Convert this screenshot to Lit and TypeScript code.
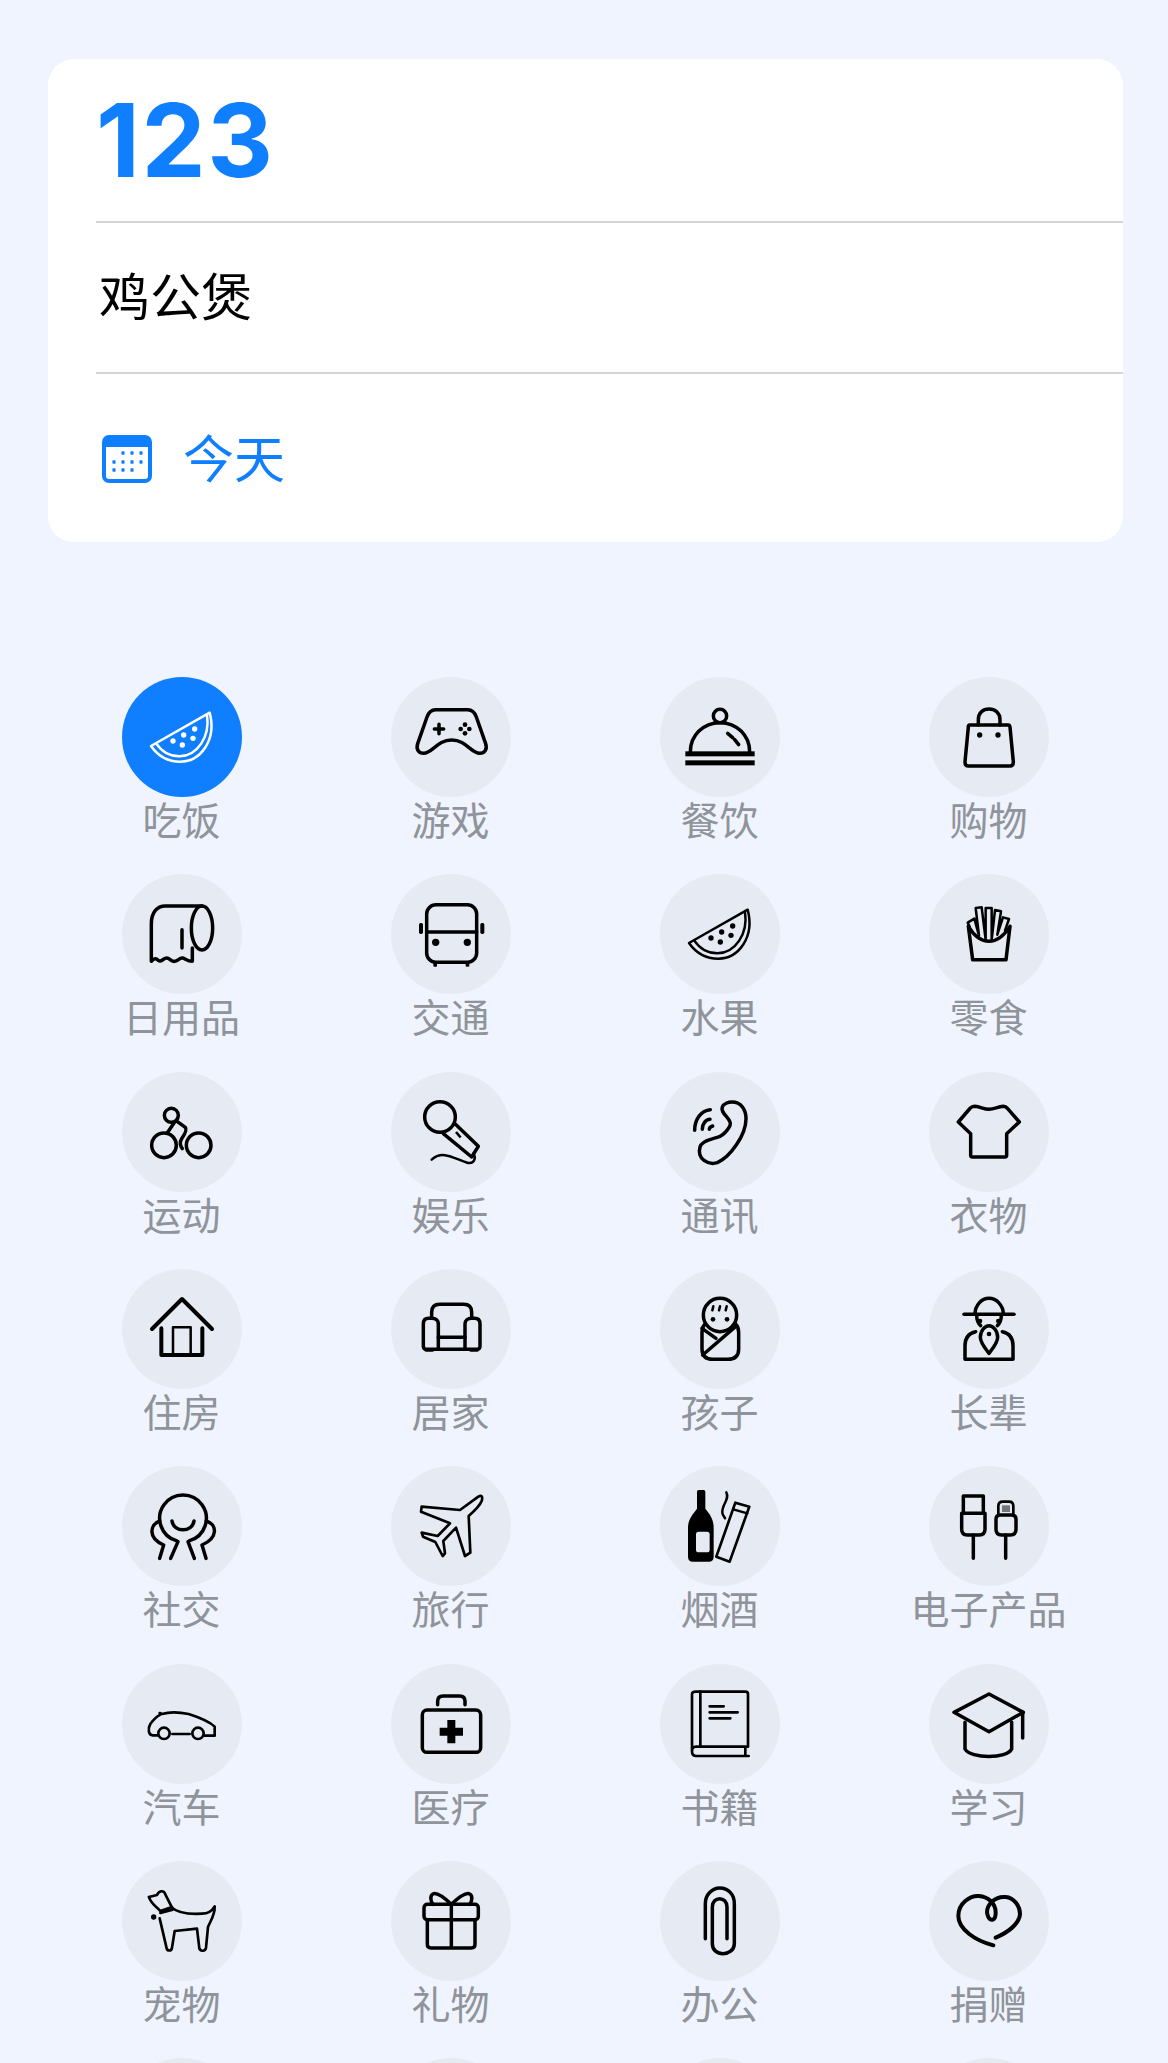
import { LitElement, html, css, svg } from "lit";
import { customElement } from "lit/decorators.js";

const melon = svg`
  <path d="M263 107 L87 207 C110 240 140 254 175 254 C235 254 285 190 263 107Z"/>
  <path d="M103 200 C120 225 145 238 172 238 C225 238 265 180 255 114" />
  <g class="f"><circle cx="218" cy="156" r="8"/><circle cx="185" cy="174" r="8"/><circle cx="153" cy="192" r="8"/><circle cx="213" cy="184" r="8"/><circle cx="181" cy="204" r="8"/></g>`;

const items: { label: string; icon: unknown; active?: boolean }[] = [
  { label: "吃饭", active: true, icon: svg`<g class="thin">${melon}</g>` },
  { label: "游戏", icon: svg`
    <path d="M134 98 H230 C245 98 252 108 256 120 L284 200 C290 218 280 229 266 229 C240 229 225 189 182 189 C139 189 124 229 98 229 C84 229 74 218 80 200 L108 120 C112 108 119 98 134 98Z"/>
    <path d="M130 156 H158 M144 142 V170"/>
    <g class="f"><circle cx="222" cy="143" r="7"/><circle cx="222" cy="169" r="7"/><circle cx="209" cy="156" r="7"/><circle cx="235" cy="156" r="7"/></g>` },
  { label: "餐饮", icon: svg`
    <circle cx="180" cy="117" r="20"/>
    <path d="M91 225 C91 175 130 137 180 137 C230 137 269 175 269 225"/>
    <path d="M203 169 L218 182 M224 188 L236 203"/>
    <g class="f"><rect x="76" y="223" width="208" height="15"/><rect x="76" y="250" width="208" height="15"/></g>` },
  { label: "购物", icon: svg`
    <path d="M122 144 H238 Q242 144 243 150 L253 255 Q253 267 243 267 H118 Q108 267 108 255 L118 150 Q118 144 122 144Z"/>
    <path d="M148 144 V128 C148 108 162 96 180 96 C198 96 213 108 213 128 V144"/>
    <g class="f"><circle cx="152" cy="174" r="8"/><circle cx="207" cy="174" r="8"/></g>` },
  { label: "日用品", icon: svg`
    <ellipse cx="240" cy="162" rx="32" ry="66"/>
    <path d="M240 96 H130 C105 96 88 115 88 150 V262 C96 252 102 252 110 260 C118 266 124 252 134 252 C144 252 146 264 158 262 C168 262 172 250 182 252 C190 254 196 262 211 262 V222"/>
    <path d="M180 167 V222"/>` },
  { label: "交通", icon: svg`
    <rect x="107" y="92" width="150" height="173" rx="28"/>
    <path d="M107 174 H257"/>
    <g class="f"><circle cx="134" cy="205" r="11"/><circle cx="229" cy="205" r="11"/>
    <rect x="84" y="147" width="12" height="33" rx="5"/><rect x="268" y="147" width="12" height="33" rx="5"/>
    <rect x="127" y="263" width="11" height="15" rx="3"/><rect x="224" y="263" width="11" height="15" rx="3"/></g>` },
  { label: "水果", icon: svg`<g class="thin">${melon}</g>` },
  { label: "零食", icon: svg`
    <path d="M118 157 L131 257 H231 L243 157 C225 185 205 202 180 202 C155 202 135 185 118 157Z"/>
    <path class="thin" d="M122 158 L116 146 L136 134 L150 185 M150 185 L140 102 L158 100 L170 198 M170 198 V102 H188 V198 M188 198 L198 108 L216 112 L205 182 M205 182 L222 130 L240 135 L228 170"/>` },
  { label: "运动", icon: svg`
    <circle cx="148" cy="130" r="21"/><circle cx="126" cy="220" r="37"/><circle cx="230" cy="220" r="37"/>
    <path d="M165 148 L190 166 C197 174 186 190 179 200 C172 212 175 222 181 230"/>
    <path d="M158 150 L135 184"/>` },
  { label: "娱乐", icon: svg`
    <circle cx="147" cy="135" r="46"/>
    <path d="M157 185 L242 255 L262 223 L192 155"/>
    <path class="f" d="M192 182 L198 178 L212 194 L206 199Z"/>
    <path class="thin" d="M122 263 C157 230 197 265 232 273 C252 275 255 255 247 245"/>` },
  { label: "通讯", icon: svg`
    <path d="M216 90 C245 90 258 115 258 140 C258 190 210 255 172 272 C145 280 110 262 120 225 C125 205 160 200 172 196 C195 190 215 160 210 150 C205 135 180 120 187 105 C190 95 205 90 216 90Z"/>
    <path d="M104 175 C104 140 125 115 151 113 M127 172 C127 155 138 142 150 142 M148 172 C148 168 152 164 158 162"/>` },
  { label: "衣物", icon: svg`
    <path d="M138 103 C155 105 165 112 180 112 C195 112 205 105 223 103 C228 103 232 105 236 110 L271 150 L233 185 V250 Q233 255 228 255 H130 Q125 255 125 250 V185 L88 150 L124 108 Q130 103 138 103Z"/>` },
  { label: "住房", icon: svg`
    <path class="bold" d="M90 180 L180 90 L270 180"/>
    <path class="bold" d="M118 178 V258 H241 V178"/>
    <path class="thin" d="M153 255 V175 H206 V255"/>` },
  { label: "居家", icon: svg`
    <path d="M122 148 V130 Q122 106 146 106 H218 Q242 106 242 130 V148"/>
    <path d="M142 240 V165 C142 155 135 148 122 148 H113 Q97 148 97 165 V232 Q97 241 106 241 H258 Q267 241 267 232 V165 Q267 148 251 148 H242 C230 148 222 155 222 165 V240"/>
    <path d="M142 205 H222"/>
    <g class="f"><rect x="100" y="238" width="30" height="10" rx="5"/><rect x="234" y="238" width="30" height="10" rx="5"/></g>` },
  { label: "孩子", icon: svg`
    <circle cx="180" cy="138" r="50"/>
    <path d="M135 165 C128 172 126 178 126 190 V240 Q126 271 158 271 H204 Q236 271 236 240 V190 C236 178 234 172 227 165"/>
    <path d="M128 258 L230 170 M126 178 L168 208"/>
    <path class="thin" d="M160 112 L157 124 M180 112 L177 124 M200 112 L197 124"/>
    <g class="f"><circle cx="159" cy="151" r="7"/><circle cx="201" cy="151" r="7"/></g>` },
  { label: "长辈", icon: svg`
    <path d="M105 136 H255"/>
    <path d="M138 136 C138 108 158 88 180 88 C202 88 223 108 223 136"/>
    <path d="M143 138 C143 155 146 162 155 170 M217 138 C217 155 214 162 205 170"/>
    <path d="M180 170 C168 170 154 185 154 205 C154 222 170 240 180 253 C190 240 206 222 206 205 C206 185 192 170 180 170Z"/>
    <path d="M140 188 C120 192 108 205 108 230 V271 H252 V230 C252 205 240 192 220 188"/>
    <g class="f"><circle cx="153" cy="156" r="7"/><circle cx="208" cy="156" r="7"/><circle cx="180" cy="195" r="7"/></g>` },
  { label: "社交", icon: svg`
    <path d="M163 224 A70 70 0 1 1 203 224"/>
    <path d="M150 165 C155 200 211 200 216 165"/>
    <path d="M168 227 L146 277 M198 227 L217 277"/>
    <path d="M113 165 C85 175 75 215 125 237 L113 277 M253 165 C285 175 290 215 240 237 L252 277"/>` },
  { label: "旅行", icon: svg`
    <path class="mid" stroke-linejoin="round" d="M262 92 C272 86 276 92 272 105 C268 115 250 135 233 150 L238 260 L222 270 L195 185 L157 225 L162 262 L155 270 L133 228 L96 212 L92 200 L140 210 L177 172 L90 137 L92 122 L207 132 Z"/>` },
  { label: "烟酒", icon: svg`
    <path class="f" fill-rule="evenodd" d="M116 72 H131 Q136 72 136 78 V128 C150 145 161 160 161 185 V272 Q161 287 146 287 H99 Q84 287 84 272 V185 C84 160 98 145 111 128 V78 Q111 72 116 72Z M116 197 Q108 197 108 205 V251 Q108 259 116 259 H141 Q149 259 149 251 V205 Q149 197 141 197Z"/>
    <path class="mid" d="M226 110 L268 122 L209 287 L169 272Z"/>
    <path class="thin" d="M220 130 L262 142"/>
    <path class="thin" d="M199 79 C210 100 185 115 187 140 C188 150 193 152 195 157"/>` },
  { label: "电子产品", icon: svg`
    <path d="M103 142 V90 H163 V142"/>
    <path d="M98 142 H168 V190 Q168 207 151 207 H115 Q98 207 98 190Z"/>
    <path d="M133 207 V277 M230 207 V277"/>
    <path class="mid" d="M208 147 V120 Q208 107 221 107 H240 Q253 107 253 120 V147"/>
    <path d="M201 160 Q201 147 214 147 H248 Q261 147 261 160 V190 Q261 207 244 207 H218 Q201 207 201 190Z"/>
    <path class="hair" d="M222 118 V138 M228 118 V138 M234 118 V138 M240 118 V138"/>` },
  { label: "汽车", icon: svg`
    <g class="mid">
      <circle cx="126" cy="208" r="17"/><circle cx="228" cy="208" r="17"/>
      <path d="M151 210 H203"/>
      <path d="M108 214 H92 C80 214 76 195 85 180 C92 170 100 160 115 152 L113 147 L120 150 C140 144 170 144 200 150 C225 158 260 170 278 188 V215 H246"/>
    </g>` },
  { label: "医疗", icon: svg`
    <rect x="94" y="138" width="175" height="127" rx="14"/>
    <path d="M140 122 V112 Q140 96 156 96 H206 Q222 96 222 112 V122"/>
    <path class="f" d="M169 168 H193 V191 H216 V215 H193 V238 H169 V215 H146 V191 H169Z"/>` },
  { label: "书籍", icon: svg`
    <g class="mid">
      <path d="M108 83 H256 Q264 83 264 91 V248 H108 Q96 248 96 262 Q96 276 108 276 H266 M96 262 V91 Q96 83 108 83"/>
      <path d="M121 83 V248 M256 250 V274"/>
      <path d="M149 127 H191 M149 145 H233 M149 163 H211"/>
    </g>` },
  { label: "学习", icon: svg`
    <path stroke-linejoin="round" d="M180 90 L283 145 L180 203 L75 145Z"/>
    <path d="M108 175 V255 C125 285 235 285 248 255 V175"/>
    <path d="M281 145 V222"/>` },
  { label: "宠物", icon: svg`
    <g class="mid">
      <path d="M81 108 L105 102 C110 90 125 85 130 100 L150 140 C165 155 200 160 240 158 C258 158 270 150 278 136 C280 160 265 180 258 198 L252 260 C250 272 234 272 232 262 L225 203 L158 210 L150 260 C148 272 136 270 134 262 L113 172"/>
      <path d="M81 108 C85 125 100 135 115 150 L150 138 M115 156 L152 146"/>
    </g>
    <circle class="f" cx="95" cy="168" r="8"/>` },
  { label: "礼物", icon: svg`
    <rect x="99" y="130" width="163" height="46" rx="10"/>
    <path d="M109 176 V250 Q109 261 120 261 H241 Q252 261 252 250 V176 M181 130 V261"/>
    <path d="M181 130 C160 110 140 95 128 98 C116 102 118 120 126 130 M181 130 C202 110 222 95 234 98 C246 102 244 120 236 130"/>` },
  { label: "办公", icon: svg`
    <path d="M136 233 V128 C136 100 158 81 179 81 C205 81 223 100 223 128 V248 C223 268 205 278 189 278 C172 278 157 268 157 248 V138 C157 122 168 113 179 113 C190 113 201 122 201 138 V233"/>` },
  { label: "捐赠", icon: svg`
    <path class="bold" d="M193 253 C140 240 88 205 88 165 C88 125 125 103 150 105 C175 107 200 125 200 155 C200 180 182 185 175 160 C170 135 195 105 230 108 C255 110 273 135 273 160 C270 190 235 215 200 230"/>` },
  { label: "", icon: null },
  { label: "", icon: null },
  { label: "", icon: null },
  { label: "", icon: null },
];

@customElement("app-root")
export class AppRoot extends LitElement {
  static styles = css`
    :host {
      display: block;
      height: 2063px;
      overflow: hidden;
      background: #f0f4fe;
      font-family: "Noto Sans CJK SC", "Noto Sans", sans-serif;
    }
    .page {
      padding: 59px 44px 0 48px;
      display: flex;
      flex-direction: column;
    }
    .card {
      width: 1075px;
      height: 483px;
      background: #fff;
      border-radius: 26px;
      display: flex;
      flex-direction: column;
      padding-left: 48px;
      box-sizing: border-box;
    }
    .row {
      display: flex;
      align-items: center;
      border-bottom: 2px solid #d4d5d6;
      box-sizing: border-box;
    }
    .amount {
      height: 164px;
      font: 700 102px/1 Inter, "Liberation Sans", sans-serif;
      color: #0f7fff;
      letter-spacing: 1.5px;
    }
    .name {
      height: 151px;
      font-size: 51px;
      color: #000;
      padding: 0 0 8px 3px;
    }
    .date {
      flex: 1;
      border: 0;
      gap: 31px;
      padding-left: 6px;
      font-size: 51px;
      color: #0f7fff;
    }
    .date span {
      padding-bottom: 4px;
    }
    .date svg {
      width: 50px;
      height: 48px;
      margin-top: 1px;
      flex: none;
    }
    .cal-b {
      fill: none;
      stroke: #0f7fff;
      stroke-width: 4;
    }
    .cal-f {
      fill: #0f7fff;
    }
    .grid {
      margin: 135px 0 0 -1px;
      width: 1076px;
      display: grid;
      grid-template-columns: repeat(4, 269px);
      grid-auto-rows: 197.33px;
    }
    .item {
      display: flex;
      flex-direction: column;
      align-items: center;
    }
    .circle {
      width: 120px;
      height: 120px;
      flex: none;
      border-radius: 50%;
      background: #e6ebf3;
      color: #000;
    }
    .circle.active {
      background: #0f7fff;
      color: #fff;
    }
    .circle svg {
      display: block;
      width: 120px;
      height: 120px;
      fill: none;
      stroke: currentColor;
      stroke-width: 10.5;
      stroke-linecap: round;
      stroke-linejoin: round;
    }
    .circle svg .thin {
      stroke-width: 7.5;
    }
    .circle svg .mid {
      stroke-width: 8;
    }
    .circle svg .bold {
      stroke-width: 12;
    }
    .circle svg .hair {
      stroke-width: 3;
      stroke-linecap: butt;
    }
    .circle svg .f {
      fill: currentColor;
      stroke: none;
    }
    .label {
      font-size: 39px;
      font-weight: 400;
      line-height: 43px;
      color: #8f939a;
      white-space: nowrap;
    }
  `;

  render() {
    const dots: [number, number][] = [
      [21, 18], [30, 18], [39, 18],
      [12, 27], [21, 27], [30, 27], [39, 27],
      [12, 35], [21, 35], [30, 35],
    ];
    return html`
      <div class="page">
        <section class="card">
          <div class="row amount">123</div>
          <div class="row name">鸡公煲</div>
          <div class="row date">
            <svg viewBox="0 0 50 48">
              <rect class="cal-b" x="2" y="2" width="46" height="44" rx="5" />
              <path class="cal-f" d="M2 12 V6 Q2 1 7 1 H43 Q48 1 48 6 V12Z" />
              ${dots.map(([x, y]) => svg`<rect class="cal-f" x=${x - 1.6} y=${y - 1.8} width="3.2" height="3.6" rx="0.8" />`)}
            </svg>
            <span>今天</span>
          </div>
        </section>
        <section class="grid">
          ${items.map(
            (it) => html`
              <div class="item">
                <div class="circle ${it.active ? "active" : ""}">
                  ${it.icon ? html`<svg viewBox="0 0 360 360">${it.icon}</svg>` : null}
                </div>
                ${it.label ? html`<div class="label">${it.label}</div>` : null}
              </div>
            `
          )}
        </section>
      </div>
    `;
  }
}
